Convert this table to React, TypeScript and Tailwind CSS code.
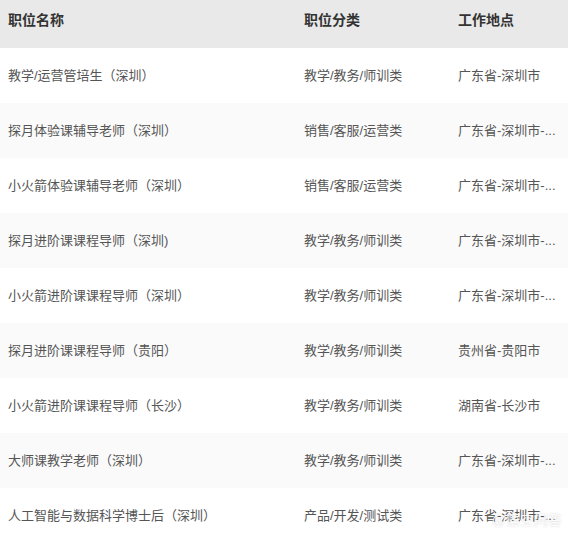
import React from "react";

const rows = [
  { name: "教学/运营管培生（深圳）", cat: "教学/教务/师训类", loc: "广东省-深圳市" },
  { name: "探月体验课辅导老师（深圳）", cat: "销售/客服/运营类", loc: "广东省-深圳市-..." },
  { name: "小火箭体验课辅导老师（深圳）", cat: "销售/客服/运营类", loc: "广东省-深圳市-..." },
  { name: "探月进阶课课程导师（深圳)", cat: "教学/教务/师训类", loc: "广东省-深圳市-..." },
  { name: "小火箭进阶课课程导师（深圳）", cat: "教学/教务/师训类", loc: "广东省-深圳市-..." },
  { name: "探月进阶课课程导师（贵阳）", cat: "教学/教务/师训类", loc: "贵州省-贵阳市" },
  { name: "小火箭进阶课课程导师（长沙）", cat: "教学/教务/师训类", loc: "湖南省-长沙市" },
  { name: "大师课教学老师（深圳）", cat: "教学/教务/师训类", loc: "广东省-深圳市-..." },
  { name: "人工智能与数据科学博士后（深圳）", cat: "产品/开发/测试类", loc: "广东省-深圳市-..." },
];

export default function App() {
  return (
    <div
      className="relative w-[568px] h-[540px] overflow-hidden bg-white"
      style={{ fontFamily: '"Liberation Sans", "Noto Sans CJK SC", sans-serif' }}
    >
      <div className="grid grid-cols-[304px_154px_1fr] h-[48px] bg-[#e9e9e9] pt-[10px] text-[14px] leading-[20px] font-bold text-[#333]">
        <div className="pl-2">职位名称</div>
        <div>职位分类</div>
        <div>工作地点</div>
      </div>
      {rows.map((r, i) => (
        <div
          key={i}
          className={`grid grid-cols-[304px_154px_1fr] h-[55px] items-center text-[13px] text-[#555] ${
            i % 2 === 1 ? "bg-[#fafafa]" : "bg-white"
          }`}
        >
          <div className="pl-2 whitespace-nowrap">{r.name}</div>
          <div className="whitespace-nowrap">{r.cat}</div>
          <div className="whitespace-nowrap">{r.loc}</div>
        </div>
      ))}
      <div
        className="absolute right-[6px] bottom-[12px] text-[14px] leading-[16px] text-white/90"
        style={{ textShadow: "0 0 2px rgba(0,0,0,0.2)" }}
      >
        @悟空问答
      </div>
    </div>
  );
}
